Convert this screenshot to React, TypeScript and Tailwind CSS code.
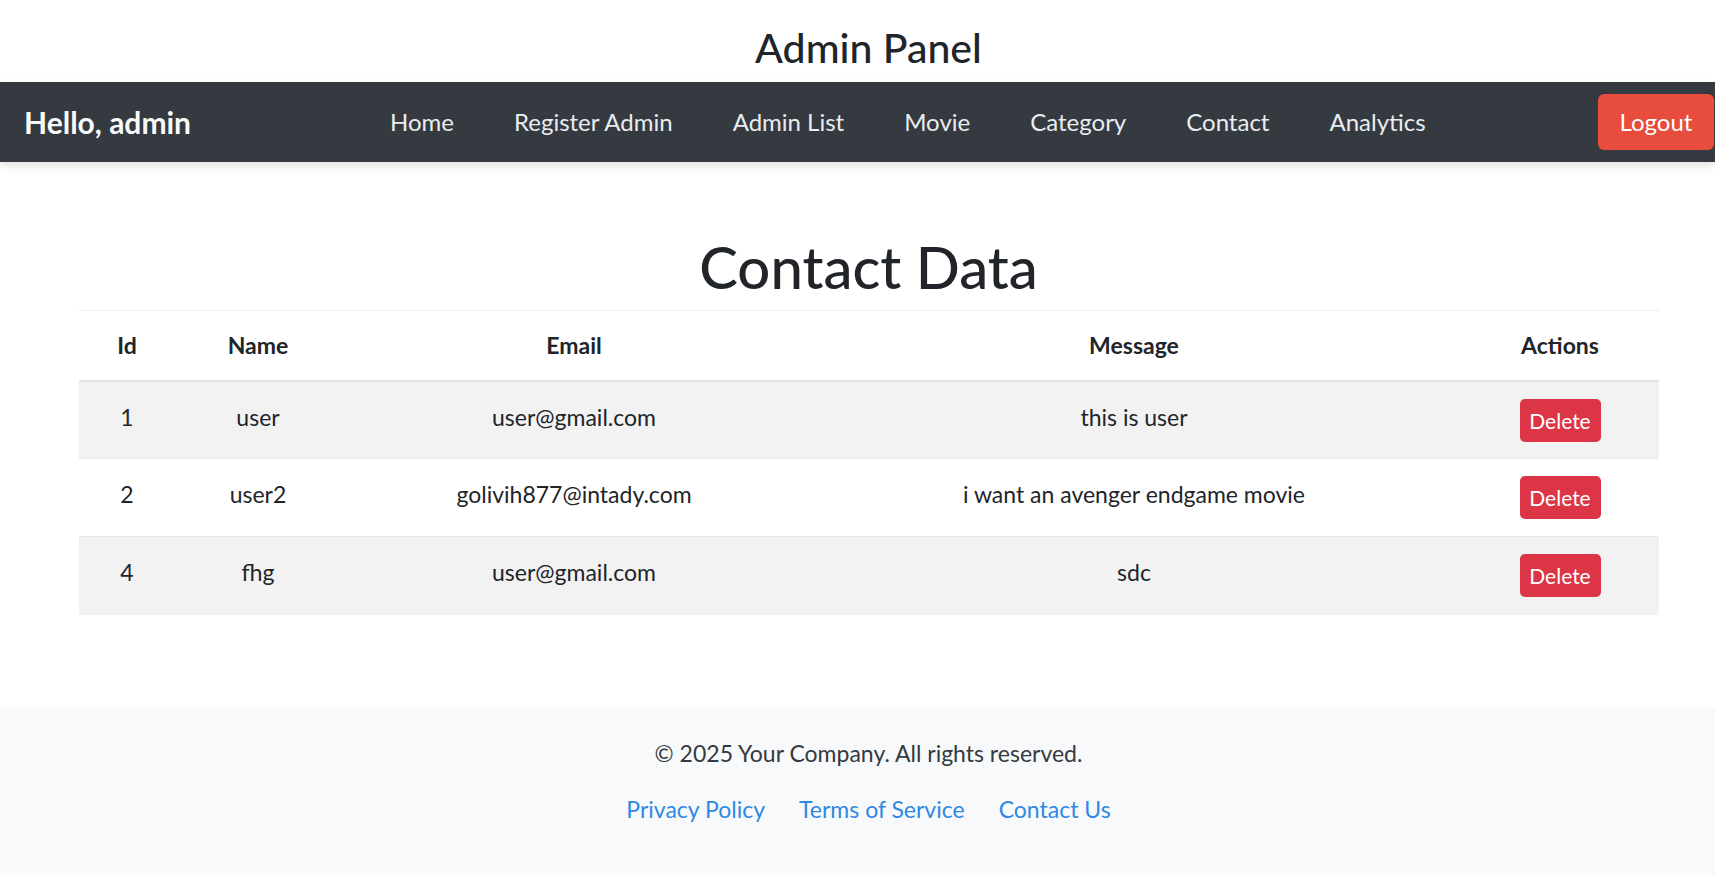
import React from 'react';

const links = ['Home', 'Register Admin', 'Admin List', 'Movie', 'Category', 'Contact', 'Analytics'];

const contacts = [
  { id: 1, name: 'user', email: 'user@gmail.com', message: 'this is user' },
  { id: 2, name: 'user2', email: 'golivih877@intady.com', message: 'i want an avenger endgame movie' },
  { id: 4, name: 'fhg', email: 'user@gmail.com', message: 'sdc' },
];

export default function App() {
  return (
    <div className="min-h-screen overflow-x-hidden bg-white text-[#212529] font-['Lato','Noto_Sans',sans-serif]">
      {/* page header */}
      <div className="w-[1737px] h-[82px] pt-[23px] text-center">
        <h3 className="text-[41px] leading-[50px] font-medium">Admin Panel</h3>
      </div>

      {/* navbar */}
      <nav className="w-full h-[80px] bg-[#343a40] flex items-center shadow-[0_4px_8px_rgba(0,0,0,0.12)] relative z-10">
        <div className="w-[360px] shrink-0 pl-[24px] text-[30px] font-bold text-[#f8f9fa]">Hello, admin</div>
        <ul className="flex items-center">
          {links.map((l) => (
            <li key={l}>
              <a href="#" className="px-[30px] text-[24px] text-[#e9ecef]">{l}</a>
            </li>
          ))}
        </ul>
        <button className="ml-auto mr-[1px] w-[116px] h-[56px] shrink-0 rounded-[6px] bg-[#e74c3c] text-white text-[24px]">
          Logout
        </button>
      </nav>

      {/* main */}
      <main className="w-[1737px] pt-[70px]">
        <h1 className="text-center text-[58px] leading-[70px] font-medium mb-[8px]">Contact Data</h1>
        <div className="px-[79px]">
          <table className="w-full table-fixed border-collapse text-[23px] leading-[36px] text-center">
            <colgroup>
              <col className="w-[96px]" />
              <col className="w-[166px]" />
              <col className="w-[466px]" />
              <col className="w-[654px]" />
              <col className="w-[198px]" />
            </colgroup>
            <thead>
              <tr className="h-[70px] border-t border-[#eceef0] border-b-2 border-b-[#dee2e6]">
                <th className="font-bold">Id</th>
                <th className="font-bold">Name</th>
                <th className="font-bold">Email</th>
                <th className="font-bold">Message</th>
                <th className="font-bold">Actions</th>
              </tr>
            </thead>
            <tbody>
              {contacts.map((c, i) => (
                <tr key={c.id} className={`h-[78px] border-t border-[#e6e8ea] ${i % 2 === 0 ? 'bg-[#f2f2f2]' : 'bg-white'}`}>
                  <td className="align-top pt-[17px]">{c.id}</td>
                  <td className="align-top pt-[17px]">{c.name}</td>
                  <td className="align-top pt-[17px]">{c.email}</td>
                  <td className="align-top pt-[17px]">{c.message}</td>
                  <td className="align-top pt-[17px]">
                    <button className="w-[81px] h-[43px] rounded-[5px] bg-[#dc3545] text-white text-[21px] leading-none">
                      Delete
                    </button>
                  </td>
                </tr>
              ))}
            </tbody>
          </table>
        </div>
      </main>

      {/* footer */}
      <footer className="w-[1737px] mt-[92px] bg-[#f8f9fa] pt-[28px] pb-[48px] text-center text-[23px] leading-[36px]">
        <p className="text-[#343a40]">© 2025 Your Company. All rights reserved.</p>
        <div className="mt-[20px] flex justify-center gap-[34px] text-[#2f89e3]">
          <a href="#">Privacy Policy</a>
          <a href="#">Terms of Service</a>
          <a href="#">Contact Us</a>
        </div>
      </footer>
    </div>
  );
}
